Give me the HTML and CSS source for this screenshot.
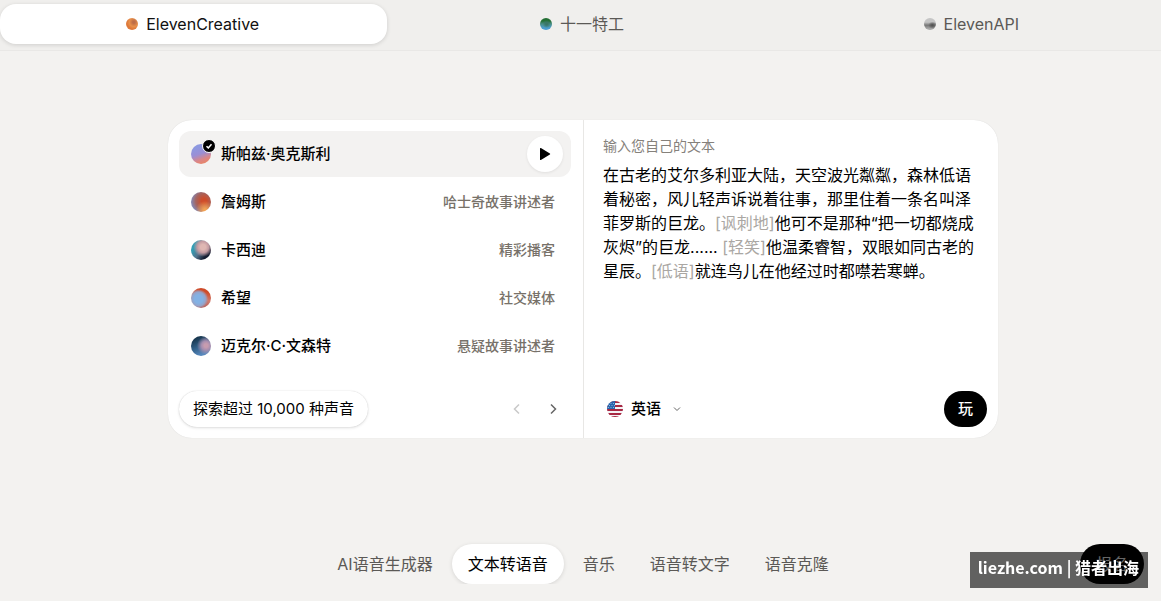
FILE: index.html
```html
<!DOCTYPE html>
<html lang="zh-CN">
<head>
	<meta charset="UTF-8">
	<meta name="viewport" content="width=device-width, initial-scale=1.0">

	<title>ElevenCreative - 文本转语音</title>

	<link rel="stylesheet" href="styles.css">
</head>
<body>
	<div class="page">
		<header class="products">
			<a class="product active" href="#creative"><span class="dot dot-creative"></span>ElevenCreative</a>
			<a class="product" href="#agents"><span class="dot dot-agents"></span>十一特工</a>
			<a class="product" href="#api"><span class="dot dot-api"></span>ElevenAPI</a>
		</header>

		<main>
			<section class="card">
				<div class="voices">
					<ul class="voice-list">
						<li class="voice selected">
							<button class="voice-name" type="button">
								<span class="orb orb-1">
									<svg class="check" viewBox="0 0 14 14" aria-hidden="true"><circle cx="7" cy="7" r="6.5" fill="#000" stroke="#fff"/><path d="M4.5 7.2l1.8 1.7 3.2-3.7" fill="none" stroke="#fff" stroke-width="1.5"/></svg>
								</span>
								斯帕兹·奥克斯利
							</button>
							<button class="preview" type="button" aria-label="播放">
								<svg width="12" height="14" viewBox="0 0 12 14"><path d="M1 1.6v10.8c0 .5.5.8.9.5l9-5.3c.4-.3.4-.9 0-1.1l-9-5.4c-.4-.3-.9 0-.9.5z"/></svg>
							</button>
						</li>
						<li class="voice">
							<button class="voice-name" type="button"><span class="orb orb-2"></span>詹姆斯</button>
							<span class="voice-type">哈士奇故事讲述者</span>
						</li>
						<li class="voice">
							<button class="voice-name" type="button"><span class="orb orb-3"></span>卡西迪</button>
							<span class="voice-type">精彩播客</span>
						</li>
						<li class="voice">
							<button class="voice-name" type="button"><span class="orb orb-4"></span>希望</button>
							<span class="voice-type">社交媒体</span>
						</li>
						<li class="voice">
							<button class="voice-name" type="button"><span class="orb orb-5"></span>迈克尔·C·文森特</button>
							<span class="voice-type">悬疑故事讲述者</span>
						</li>
					</ul>
					<div class="card-footer">
						<a class="explore" href="#voices">探索超过 10,000 种声音</a>
						<div class="pager">
							<button type="button" aria-label="上一页" disabled>
								<svg width="16" height="16" viewBox="0 0 16 16"><path d="M10 3.5L5.5 8l4.5 4.5"/></svg>
							</button>
							<button type="button" aria-label="下一页">
								<svg width="16" height="16" viewBox="0 0 16 16"><path d="M6 3.5l4.5 4.5L6 12.5"/></svg>
							</button>
						</div>
					</div>
				</div>

				<div class="editor">
					<div class="editor-body">
						<span id="editor-label">输入您自己的文本</span>
						<div class="editor-text" role="textbox" aria-multiline="true" aria-labelledby="editor-label" contenteditable="true" spellcheck="false">在古老的艾尔多利亚大陆，天空波光粼粼，森林低语着秘密，风儿轻声诉说着往事，那里住着一条名叫泽菲罗斯的巨龙。<span class="tag">[讽刺地]</span>他可不是那种“把一切都烧成灰烬”的巨龙...... <span class="tag">[轻笑]</span>他温柔睿智，双眼如同古老的星辰。<span class="tag">[低语]</span>就连鸟儿在他经过时都噤若寒蝉。</div>
					</div>
					<div class="card-footer">
						<div class="language">
							<svg width="16" height="16" viewBox="0 0 16 16" aria-hidden="true">
								<clipPath id="flag"><circle cx="8" cy="8" r="8"/></clipPath>
								<g clip-path="url(#flag)">
									<path fill="#f4f2f5" d="M0 0h16v16H0z"/>
									<path stroke="#a72843" stroke-width="2" d="M0 1h16M0 5h16M0 9h16M0 13h16"/>
									<path stroke="#a72843" d="M0 15.5h16"/>
									<path fill="#2765ae" d="M0 0h8v8H0z"/>
									<path stroke="#d5e2f2" stroke-width=".6" stroke-dasharray="1 1.5" d="M1 2.5h7M2 4.5h6M1 6.5h7"/>
								</g>
							</svg>
							<select aria-label="语言">
								<option>英语</option>
							</select>
							<svg class="chevron" width="10" height="10" viewBox="0 0 10 10" aria-hidden="true"><path d="M2 3.5l3 3 3-3"/></svg>
						</div>
						<button class="play" type="button">玩</button>
					</div>
				</div>
			</section>

			<nav class="tools">
				<a href="#generator">AI语音生成器</a>
				<a class="active" href="#tts">文本转语音</a>
				<a href="#music">音乐</a>
				<a href="#stt">语音转文字</a>
				<a href="#cloning">语音克隆</a>
			</nav>
		</main>
	</div>

	<a class="signup" href="#signup">报名</a>
	<div class="site-mark">liezhe.com | 猎者出海</div>
</body>
</html>
```
FILE: styles.css
```css
* { box-sizing: border-box; }

body {
	margin     : 0;
	overflow   : hidden;
	background : #f3f2f0;
	color      : #000;
	font-family: Inter, "Noto Sans CJK SC", sans-serif;
	font-size  : 16px;
	line-height: 24px;
}

a {
	color          : inherit;
	text-decoration: none;
}

button, select {
	padding   : 0;
	border    : 0;
	background: none;
	color     : inherit;
	font      : inherit;
}

/* the last tab runs slightly past the window */
.page { margin-right: -5px; }

.products {
	display              : grid;
	grid-template-columns: repeat(3, 1fr);
	gap                  : 2px;
	padding              : 4px 0 6px;
	border-bottom        : 1px solid #e9e8e6;
	background           : #f0efed;
}

.product {
	display        : flex;
	align-items    : center;
	justify-content: center;
	gap            : 8px;
	height         : 40px;
	padding-right  : 2px;
	border-radius  : 16px;
	color          : #5b5956;
}

.product.active {
	background: #fff;
	box-shadow: 0 1px 4px rgba(0, 0, 0, .14);
	color     : #111;
}

.dot {
	width        : 12px;
	height       : 12px;
	border-radius: 50%;
}

.dot-creative { background: radial-gradient(circle at 65% 35%, #bd6d48 0 10%, #e8904b 40%, #dc7537 65%, #eda873); }
.dot-agents { background: radial-gradient(circle at 55% 50%, #3a7668 10%, transparent 45%), linear-gradient(#246f35 25%, #4b8f87 50%, #4c9ed0 85%); }
.dot-api { background: radial-gradient(ellipse at 70% 60%, #555 5%, transparent 35%), linear-gradient(#c5c5c5 35%, #777 60%, #aaa 90%); }

main {
	display       : flex;
	flex-direction: column;
	align-items   : center;
	padding-top   : 69px;
}

.card {
	display              : grid;
	grid-template-columns: 1fr 1fr;
	width                : 100%;
	max-width            : 830px;
	border-radius        : 24px;
	background           : #fff;
	box-shadow           : 0 0 1px rgba(0, 0, 0, .14);
}

.voices {
	display        : flex;
	flex-direction : column;
	justify-content: space-between;
	gap            : 22px;
	padding        : 11px 12px 11px 11px;
}

.voice-list {
	display       : flex;
	flex-direction: column;
	gap           : 2px;
	margin        : 0;
	padding       : 0;
	list-style    : none;
}

.voice {
	display        : flex;
	align-items    : center;
	justify-content: space-between;
	height         : 46px;
	padding        : 0 16px 0 12px;
	border-radius  : 12px;
}

.voice.selected {
	padding-right: 8px;
	background   : #f3f2f1;
}

.voice-name {
	display    : flex;
	align-items: center;
	gap        : 10px;
	font-size  : 15px;
	font-weight: 500;
}

.voice-type {
	color      : #777169;
	font-size  : 14px;
	font-weight: 500;
}

.orb {
	position     : relative;
	width        : 20px;
	height       : 20px;
	border-radius: 50%;
}

.orb-1 { background: linear-gradient(160deg, #8d98e0 20%, #9a8fd5 48%, #dc8685 72%, #e98566 90%); }
.orb-2 { background: radial-gradient(circle at 70% 90%, #f3a354 5%, transparent 40%), radial-gradient(circle at 65% 45%, #ce4d2b 15%, #a5645f 48%, #8885ac 72%); }
.orb-3 { background: radial-gradient(circle at 60% 35%, #dfb7b3 15%, #c39ba2 32%, transparent 55%), linear-gradient(125deg, #329db4 25%, #52738d 50%, #151d32 75%); }
.orb-4 { background: radial-gradient(circle at 38% 55%, #83b1e4 25%, #96a3c8 42%, transparent 58%), linear-gradient(20deg, #b7625d 20%, #d17b6e 50%, #ce4b29 80%); }
.orb-5 { background: radial-gradient(circle at 75% 48%, #c79caf 10%, #a58eaf 25%, transparent 50%), linear-gradient(155deg, #17364e 15%, #315f87 48%, #5788bd 80%); }

.check {
	position: absolute;
	top     : -5px;
	right   : -5px;
	width   : 14px;
	height  : 14px;
}

.preview {
	display        : flex;
	align-items    : center;
	justify-content: center;
	width          : 36px;
	height         : 36px;
	border-radius  : 50%;
	background     : #fff;
	box-shadow     : 0 1px 3px rgba(0, 0, 0, .08);
}

.card-footer {
	display        : flex;
	align-items    : center;
	justify-content: space-between;
	height         : 36px;
}

.explore {
	padding      : 6px 14px;
	border-radius: 18px;
	box-shadow   : 0 0 1px rgba(0, 0, 0, .2), 0 1px 3px rgba(0, 0, 0, .12);
	font-size    : 15px;
}

.pager { display: flex; }

.pager button {
	display        : flex;
	align-items    : center;
	justify-content: center;
	width          : 36px;
	height         : 36px;
}

.pager button:disabled { opacity: .35; }

.pager svg, .chevron {
	fill        : none;
	stroke      : #666;
	stroke-width: 1.5;
}

.editor {
	display        : flex;
	flex-direction : column;
	justify-content: space-between;
	gap            : 22px;
	padding        : 11px;
	border-left    : 1px solid #e8e7e5;
}

.editor-body { padding: 3px 8px; }

#editor-label {
	display      : block;
	margin-bottom: 5px;
	color        : #85817b;
	font-size    : 14px;
}

.editor-text { outline: none; }

.tag { color: #aaa7a3; }

.language {
	display     : flex;
	align-items : center;
	gap         : 8px;
	padding-left: 12px;
	font-size   : 15px;
	font-weight : 500;
}

.language select {
	appearance  : none;
	margin-right: 2px;
}

.language .chevron { stroke-width: 1; }

.play {
	width        : 43px;
	height       : 36px;
	border-radius: 18px;
	background   : #000;
	color        : #fff;
	font-size    : 15px;
	font-weight  : 500;
}

.tools {
	display   : flex;
	gap       : 3px;
	margin-top: 106px;
	color     : #5b5956;
}

.tools a {
	padding      : 8px 16px;
	border-radius: 20px;
}

.tools .active {
	background: #fff;
	box-shadow: 0 1px 4px rgba(0, 0, 0, .12);
	color     : #000;
}

.signup {
	position     : fixed;
	right        : 17px;
	bottom       : 17px;
	padding      : 8px 16px;
	border-radius: 20px;
	background   : #000;
	color        : #fff;
}

.site-mark {
	position   : fixed;
	right      : 13px;
	bottom     : 13px;
	padding    : 2px 9px 8px 8px;
	background : rgba(0, 0, 0, .6);
	color      : #fff;
	font-family: "Noto Sans CJK SC", sans-serif;
	font-weight: 700;
	line-height: 26px;
}
```
